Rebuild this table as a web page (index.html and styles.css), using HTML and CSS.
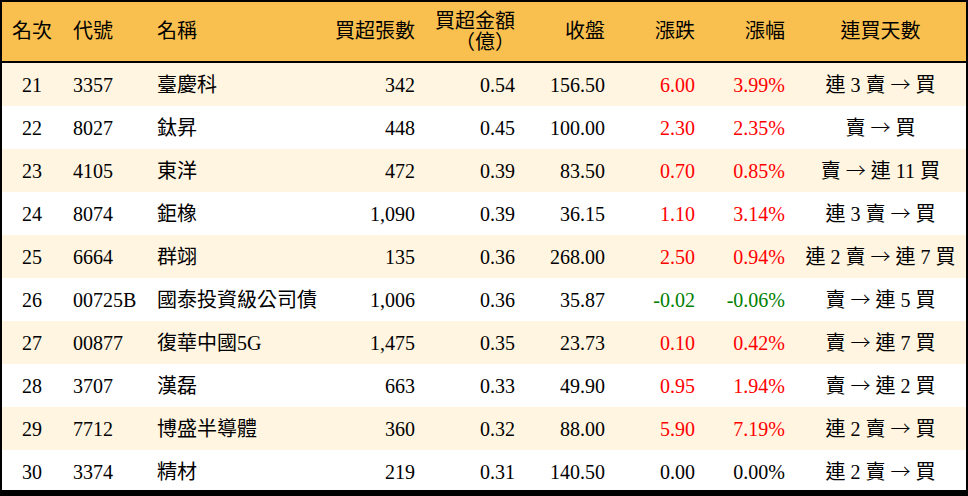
FILE: index.html
```html
<!DOCTYPE html>
<html lang="zh-Hant">
<head>
<meta charset="utf-8">
<title>買超排行</title>
<link rel="stylesheet" href="styles.css">
</head>
<body>
<div class="frame">
<table class="rank">
<colgroup>
<col class="c-rank"><col class="c-code"><col class="c-name"><col class="c-vol"><col class="c-amt"><col class="c-close"><col class="c-chg"><col class="c-pct"><col class="c-days">
</colgroup>
<thead>
<tr>
<th class="ctr">名次</th>
<th class="lft">代號</th>
<th class="lft">名稱</th>
<th class="rgt">買超張數</th>
<th class="rgt amt-head">買超金額<br><span class="unit">（億）</span></th>
<th class="rgt">收盤</th>
<th class="rgt">漲跌</th>
<th class="rgt">漲幅</th>
<th class="ctr">連買天數</th>
</tr>
</thead>
<tbody>
<tr><td class="ctr">21</td><td class="lft">3357</td><td class="lft">臺慶科</td><td class="rgt">342</td><td class="rgt">0.54</td><td class="rgt">156.50</td><td class="rgt up">6.00</td><td class="rgt up">3.99%</td><td class="ctr">連 3 賣 <span class="arr">→</span> 買</td></tr>
<tr><td class="ctr">22</td><td class="lft">8027</td><td class="lft">鈦昇</td><td class="rgt">448</td><td class="rgt">0.45</td><td class="rgt">100.00</td><td class="rgt up">2.30</td><td class="rgt up">2.35%</td><td class="ctr">賣 <span class="arr">→</span> 買</td></tr>
<tr><td class="ctr">23</td><td class="lft">4105</td><td class="lft">東洋</td><td class="rgt">472</td><td class="rgt">0.39</td><td class="rgt">83.50</td><td class="rgt up">0.70</td><td class="rgt up">0.85%</td><td class="ctr">賣 <span class="arr">→</span> 連 11 買</td></tr>
<tr><td class="ctr">24</td><td class="lft">8074</td><td class="lft">鉅橡</td><td class="rgt">1,090</td><td class="rgt">0.39</td><td class="rgt">36.15</td><td class="rgt up">1.10</td><td class="rgt up">3.14%</td><td class="ctr">連 3 賣 <span class="arr">→</span> 買</td></tr>
<tr><td class="ctr">25</td><td class="lft">6664</td><td class="lft">群翊</td><td class="rgt">135</td><td class="rgt">0.36</td><td class="rgt">268.00</td><td class="rgt up">2.50</td><td class="rgt up">0.94%</td><td class="ctr">連 2 賣 <span class="arr">→</span> 連 7 買</td></tr>
<tr><td class="ctr">26</td><td class="lft">00725B</td><td class="lft">國泰投資級公司債</td><td class="rgt">1,006</td><td class="rgt">0.36</td><td class="rgt">35.87</td><td class="rgt down">-0.02</td><td class="rgt down">-0.06%</td><td class="ctr">賣 <span class="arr">→</span> 連 5 買</td></tr>
<tr><td class="ctr">27</td><td class="lft">00877</td><td class="lft">復華中國5G</td><td class="rgt">1,475</td><td class="rgt">0.35</td><td class="rgt">23.73</td><td class="rgt up">0.10</td><td class="rgt up">0.42%</td><td class="ctr">賣 <span class="arr">→</span> 連 7 買</td></tr>
<tr><td class="ctr">28</td><td class="lft">3707</td><td class="lft">漢磊</td><td class="rgt">663</td><td class="rgt">0.33</td><td class="rgt">49.90</td><td class="rgt up">0.95</td><td class="rgt up">1.94%</td><td class="ctr">賣 <span class="arr">→</span> 連 2 買</td></tr>
<tr><td class="ctr">29</td><td class="lft">7712</td><td class="lft">博盛半導體</td><td class="rgt">360</td><td class="rgt">0.32</td><td class="rgt">88.00</td><td class="rgt up">5.90</td><td class="rgt up">7.19%</td><td class="ctr">連 2 賣 <span class="arr">→</span> 買</td></tr>
<tr><td class="ctr">30</td><td class="lft">3374</td><td class="lft">精材</td><td class="rgt">219</td><td class="rgt">0.31</td><td class="rgt">140.50</td><td class="rgt">0.00</td><td class="rgt">0.00%</td><td class="ctr">連 2 賣 <span class="arr">→</span> 買</td></tr>
</tbody>
</table>
</div>
</body>
</html>
```
FILE: styles.css
```css
html, body {
  margin: 0;
  padding: 0;
  background: #000;
}
body {
  width: 968px;
  height: 496px;
  overflow: hidden;
  font-family: "Liberation Serif", "Noto Sans CJK TC", serif;
  font-size: 20px;
  color: #000;
}
.frame {
  margin: 2px 2px 0 2px;
  width: 964px;
  height: 488px;
  overflow: hidden;
  background: #fff;
}
.rank {
  width: 964px;
  border-collapse: collapse;
  table-layout: fixed;
}
.c-rank { width: 60px; }
.c-code { width: 85px; }
.c-name { width: 183px; }
.c-vol { width: 95px; }
.c-amt { width: 100px; }
.c-close { width: 90px; }
.c-chg { width: 90px; }
.c-pct { width: 90px; }
.c-days { width: 171px; }

.rank th {
  background: #f9c04f;
  height: 59px;
  padding: 0;
  font-weight: normal;
  line-height: 21px;
  vertical-align: middle;
  border-bottom: 2px solid #000;
}
.amt-head {
  text-spacing-trim: space-all;
}
.unit {
  text-spacing-trim: space-all;
}
.arr {
  font-family: "Noto Sans CJK TC", sans-serif;
  font-weight: 300;
  font-size: 20px;
  font-variant-east-asian: full-width;
}
.rank td {
  height: 43px;
  padding: 0;
  line-height: 24px;
  vertical-align: middle;
  white-space: nowrap;
}
.rank tbody tr:nth-child(odd) td {
  background: #fff5e1;
}
.rank tbody tr:nth-child(even) td {
  background: #fff;
}
.ctr { text-align: center; }
.lft { text-align: left; padding-left: 11px !important; }
.rank th:nth-child(3), .rank td:nth-child(3) { padding-left: 10px !important; }
.rgt { text-align: right; padding-right: 10px !important; }
.up { color: #ff0000; }
.down { color: #008000; }
```
